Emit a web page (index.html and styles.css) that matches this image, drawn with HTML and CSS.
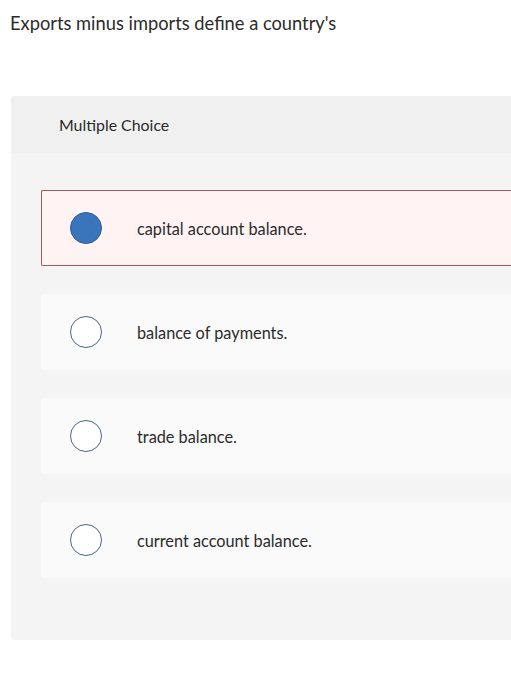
FILE: index.html
```html
<!DOCTYPE html>
<html>
<head>
<meta charset="utf-8">
<link rel="stylesheet" href="styles.css">
</head>
<body>
<p class="question">Exports minus imports define a country's</p>
<div class="card">
  <div class="card-head">Multiple Choice</div>
  <div class="card-body">
    <div class="option selected"><span class="radio"></span><span class="label">capital account balance.</span></div>
    <div class="option"><span class="radio"></span><span class="label">balance of payments.</span></div>
    <div class="option"><span class="radio"></span><span class="label">trade balance.</span></div>
    <div class="option"><span class="radio"></span><span class="label">current account balance.</span></div>
  </div>
</div>
</body>
</html>
```
FILE: styles.css
```css
html, body { margin: 0; padding: 0; background: #fff; overflow: hidden; }
body {
  font-family: "Lato", "Open Sans", sans-serif;
  color: #2b2b2b;
  width: 511px;
  height: 700px;
}
.question {
  margin: 0;
  padding: 12px 0 0 10px;
  font-size: 18.3px;
  line-height: 22px;
  height: 96px;
  box-sizing: border-box;
}
.card {
  margin-left: 11px;
  width: 500px;
  overflow: hidden;
  border-radius: 3px 0 0 3px;
}
.card-head {
  background: #f0f0f0;
  height: 57px;
  padding-left: 48px;
  display: flex;
  align-items: center;
  font-size: 15.9px;
}
.card-body {
  background: #f4f4f4;
  padding: 37px 0 62px 30px;
  display: flex;
  flex-direction: column;
  gap: 28px;
}
.option {
  height: 76px;
  box-sizing: border-box;
  background: #fafafa;
  display: flex;
  align-items: center;
  padding-left: 28px;
  border: 1px solid transparent;
  border-right: none;
}
.option.selected {
  background: #fff4f3;
  border-color: #a55a5a;
  border-radius: 2px 0 0 2px;
}
.radio {
  width: 30px;
  height: 30px;
  border: 1.5px solid #4a6680;
  border-radius: 50%;
  background: #fff;
  flex: none;
}
.selected .radio {
  background: #3a74ba;
  border-color: #2d5f99;
}
.label {
  margin-left: 35px;
  font-size: 16.3px;
}
```
